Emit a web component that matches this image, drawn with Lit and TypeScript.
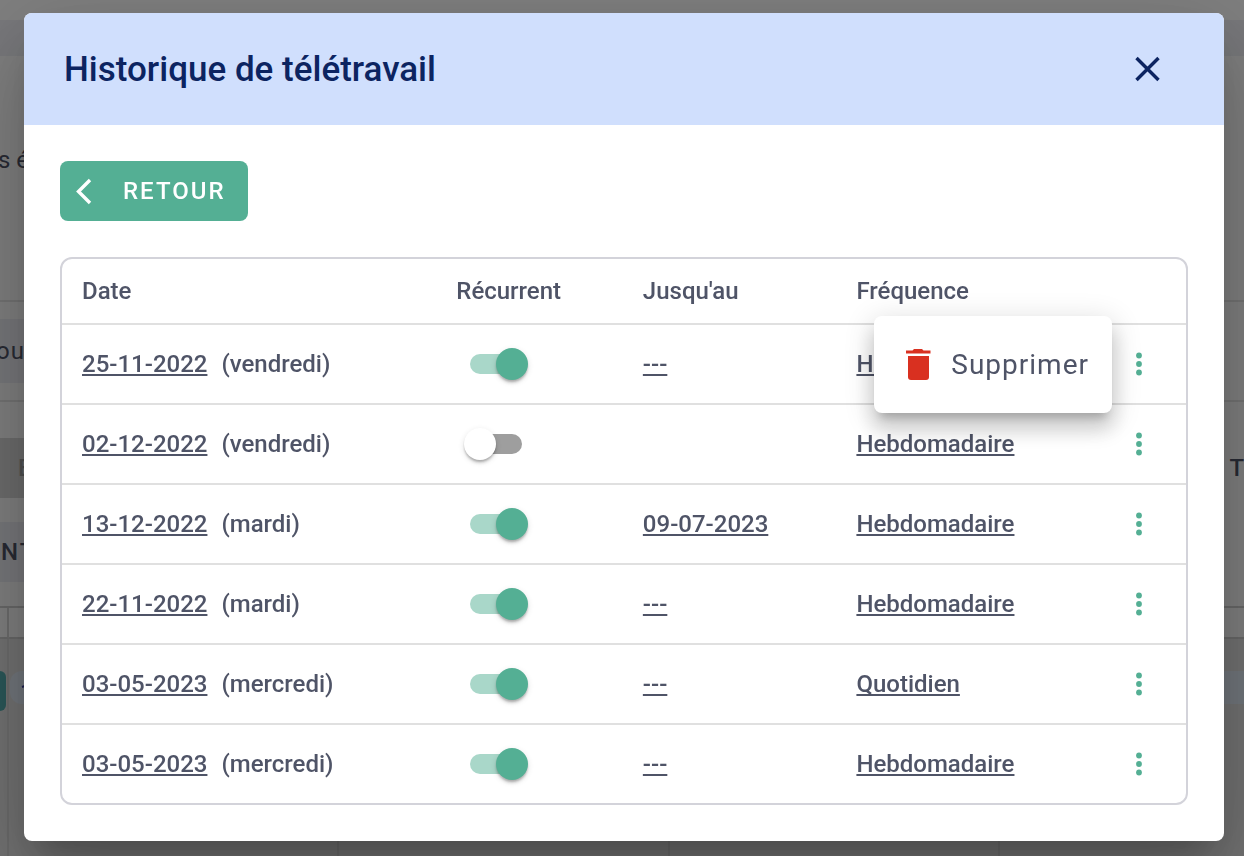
import { LitElement, html, css, nothing } from "lit";
import { customElement, property, state } from "lit/decorators.js";

interface Entry {
  date: string;
  day: string;
  recurrent: boolean;
  until: string;
  frequency: string;
}

const ENTRIES: Entry[] = [
  { date: "25-11-2022", day: "vendredi", recurrent: true, until: "---", frequency: "Hebdomadaire" },
  { date: "02-12-2022", day: "vendredi", recurrent: false, until: "", frequency: "Hebdomadaire" },
  { date: "13-12-2022", day: "mardi", recurrent: true, until: "09-07-2023", frequency: "Hebdomadaire" },
  { date: "22-11-2022", day: "mardi", recurrent: true, until: "---", frequency: "Hebdomadaire" },
  { date: "03-05-2023", day: "mercredi", recurrent: true, until: "---", frequency: "Quotidien" },
  { date: "03-05-2023", day: "mercredi", recurrent: true, until: "---", frequency: "Hebdomadaire" },
];

/** The planning page that stays visible around the dialog, under the scrim. */
@customElement("planning-page")
export class PlanningPage extends LitElement {
  static styles = css`
    :host {
      display: flex;
      flex-direction: column;
      height: 100%;
      overflow: hidden;
      background: #fff;
      color: #4f5467;
      font: 400 24px/32px Roboto, sans-serif;
    }
    .bar {
      flex: none;
      height: 36px;
      margin-top: 20px;
      background: #f0f1f6;
    }
    .intro {
      flex: none;
      box-sizing: border-box;
      height: 246px;
      padding-top: 88px;
      border-bottom: 2px solid #e6e6e6;
      text-indent: -2px;
    }
    .filters {
      flex: none;
      box-sizing: border-box;
      height: 100px;
      padding-top: 17px;
      border-bottom: 2px solid #e6e6e6;
    }
    .chip {
      display: flex;
      align-items: center;
      box-sizing: border-box;
      width: 50%;
      height: 64px;
      background: #eeeff5;
      text-indent: -4px;
      letter-spacing: 1px;
    }
    .tools {
      flex: none;
      display: grid;
      grid-template-columns: 50% 1fr;
      align-content: start;
      row-gap: 24px;
      box-sizing: border-box;
      height: 206px;
      padding-top: 36px;
      border-bottom: 2px solid #d0d0d0;
      font-weight: 500;
    }
    .off,
    .unit {
      display: flex;
      align-items: center;
      height: 60px;
    }
    .off {
      padding-left: 18px;
      background: #d9d9d9;
      color: #a0a0a0;
    }
    .unit {
      padding-left: 1px;
      background: #eeeff5;
      letter-spacing: 2px;
    }
    .total {
      display: flex;
      align-items: center;
      justify-content: flex-end;
    }
    .columns {
      flex: 1;
      display: grid;
      grid-template-columns: 9px repeat(3, 1fr) 244px;
      grid-template-rows: 31px 1fr;
    }
    .head,
    .slot {
      border-right: 2px solid #d6d6d6;
    }
    .head {
      border-bottom: 2px solid #d0d0d0;
    }
    .slot {
      padding-top: 32px;
      background: #e4e4e4;
    }
    .last {
      border-right: 0;
    }
    .event {
      height: 33px;
      margin-left: 1px;
      border-radius: 12px;
      background: #e3ecf8;
    }
    .teal {
      height: 40px;
      margin: 0 1px 0 0;
      border-radius: 0 12px 12px 0;
      background: #54aeb0;
    }
    .last .event {
      border-radius: 12px 0 0 12px;
    }
    svg {
      display: block;
    }
  `;

  render() {
    const columns = [0, 1, 2, 3, 4];
    return html`
      <div class="bar"></div>
      <div class="intro">s é</div>
      <div class="filters"><div class="chip">our</div></div>
      <div class="tools">
        <div class="off">E</div>
        <div class="total">T</div>
        <div class="unit">NT</div>
      </div>
      <div class="columns">
        ${columns.map((i) => html`<div class="head ${i === 4 ? "last" : ""}"></div>`)}
        ${columns.map(
          (i) => html`<div class="slot ${i === 4 ? "last" : ""}">
            <div class="event ${i === 0 ? "teal" : ""}">
              ${i === 1
                ? html`<svg width="24" height="33" viewBox="0 0 24 33" fill="none" stroke="#3a3fa0" stroke-width="2">
                    <path d="M12 16l4-1.500 4 1.500" />
                  </svg>`
                : nothing}
            </div>
          </div>`,
        )}
      </div>
    `;
  }
}

@customElement("history-row-menu")
export class HistoryRowMenu extends LitElement {
  @property({ type: Boolean }) open = false;

  static styles = css`
    :host {
      display: flex;
      justify-content: center;
      position: relative;
    }
    button {
      border: 0;
      background: none;
      cursor: pointer;
    }
    .kebab {
      display: block;
      padding: 0 16px;
    }
    svg {
      display: block;
    }
    .menu {
      position: absolute;
      z-index: 2;
      top: -32px;
      right: 74px;
      padding: 16px 0;
      border-radius: 8px;
      background: #fff;
      box-shadow: 0 10px 10px -6px rgba(0, 0, 0, 0.2), 0 16px 20px 2px rgba(0, 0, 0, 0.14),
        0 6px 28px 4px rgba(0, 0, 0, 0.12);
    }
    .delete {
      display: flex;
      align-items: center;
      gap: 19px;
      height: 65px;
      padding: 0 23px 0 30px;
      color: #4f5467;
      font: 400 28px/41px Roboto, sans-serif;
      letter-spacing: 1px;
    }
  `;

  render() {
    return html`
      <button class="kebab" aria-label="Actions" @click=${() => (this.open = !this.open)}>
        <svg width="8" height="32" viewBox="0 0 8 32" fill="#54af94">
          <circle cx="4" cy="7.5" r="2.900" />
          <circle cx="4" cy="16" r="2.900" />
          <circle cx="4" cy="24.5" r="2.900" />
        </svg>
      </button>
      ${this.open
        ? html`<div class="menu">
            <button class="delete">
              <svg width="28" height="33" viewBox="0 0 28 33" fill="#d93020">
                <path d="M2 2.500h6.500L10 1h8l1.500 1.500H26.500V5.500H2z" />
                <path d="M4 8h21v21a3 3 0 0 1-3 3h-15a3 3 0 0 1-3-3z" />
              </svg>
              <span>Supprimer</span>
            </button>
          </div>`
        : nothing}
    `;
  }
}

@customElement("app-root")
export class AppRoot extends LitElement {
  @state() private entries = ENTRIES;

  static styles = css`
    :host {
      display: block;
      color: #4f5467;
      font: 500 24px/32px Roboto, sans-serif;
    }
    .backdrop {
      position: fixed;
      inset: 0;
    }
    .scrim {
      position: relative;
      box-sizing: border-box;
      min-height: 100vh;
      overflow: hidden;
      padding: 13px 20px 15px 24px;
      background: rgba(0, 0, 0, 0.5);
    }
    .dialog {
      border-radius: 8px;
      background: #fff;
      box-shadow: 0 22px 30px -14px rgba(0, 0, 0, 0.2), 0 48px 76px 6px rgba(0, 0, 0, 0.14),
        0 18px 92px 16px rgba(0, 0, 0, 0.12);
    }
    .header {
      display: flex;
      align-items: center;
      justify-content: space-between;
      height: 112px;
      padding: 0 56px 0 40px;
      border-radius: 8px 8px 0 0;
      background: #d0dffd;
      color: #0c2461;
    }
    h1 {
      margin: 0;
      font-size: 35px;
      line-height: 49px;
      font-weight: 500;
    }
    button {
      border: 0;
      font: inherit;
      cursor: pointer;
    }
    .close {
      padding: 0;
      background: none;
      color: inherit;
    }
    svg {
      display: block;
    }
    .body {
      display: flex;
      flex-direction: column;
      align-items: flex-start;
      gap: 36px;
      padding: 36px;
    }
    .back {
      display: flex;
      align-items: center;
      gap: 30px;
      height: 60px;
      padding: 0 22px 0 15px;
      border-radius: 8px;
      background: #54af94;
      color: #fff;
      letter-spacing: 2px;
    }
    table {
      width: 100%;
      table-layout: fixed;
      border: 2px solid #d3d3da;
      border-radius: 12px;
      border-spacing: 0;
    }
    .col-date {
      width: 33.3%;
    }
    .col-recurrent {
      width: 16.6%;
    }
    .col-until {
      width: 19%;
    }
    .col-actions {
      width: 94px;
    }
    th,
    td {
      padding: 0 20px;
      border-bottom: 2px solid #e0e0e0;
      text-align: left;
      font-weight: 500;
    }
    th {
      height: 64px;
    }
    td {
      height: 78px;
    }
    tr:last-child td {
      border-bottom: 0;
    }
    .actions {
      padding: 0;
    }
    a {
      color: inherit;
      text-decoration: underline 2px;
      text-underline-offset: 2px;
      text-decoration-skip-ink: none;
    }
    .day {
      margin-left: 8px;
    }
    .switch {
      appearance: none;
      display: grid;
      align-items: center;
      width: 64px;
      height: 32px;
      margin: 0 0 0 8px;
      cursor: pointer;
    }
    .switch::before,
    .switch::after {
      content: "";
      grid-area: 1 / 1;
    }
    .switch::before {
      height: 20px;
      margin: 0 6px;
      border-radius: 10px;
      background: #9e9e9e;
    }
    .switch::after {
      width: 32px;
      height: 32px;
      border-radius: 50%;
      background: #fff;
      box-shadow: 0 4px 4px -2px rgba(0, 0, 0, 0.2), 0 2px 2px rgba(0, 0, 0, 0.14),
        0 2px 6px rgba(0, 0, 0, 0.12);
    }
    .switch:checked::before {
      background: #a9d7c9;
    }
    .switch:checked::after {
      justify-self: end;
      background: #54af94;
    }
  `;

  private row(entry: Entry, index: number) {
    return html`<tr>
      <td><a href="#">${entry.date}</a> <span class="day">(${entry.day})</span></td>
      <td>
        <input
          class="switch"
          type="checkbox"
          role="switch"
          aria-label="Récurrent"
          .checked=${entry.recurrent}
        />
      </td>
      <td>${entry.until ? html`<a href="#">${entry.until}</a>` : nothing}</td>
      <td><a href="#">${entry.frequency}</a></td>
      <td class="actions"><history-row-menu ?open=${index === 0}></history-row-menu></td>
    </tr>`;
  }

  render() {
    return html`
      <div class="backdrop" aria-hidden="true"><planning-page></planning-page></div>
      <div class="scrim">
        <div class="dialog" role="dialog" aria-modal="true" aria-labelledby="title">
          <div class="header">
            <h1 id="title">Historique de télétravail</h1>
            <button class="close" aria-label="Fermer">
              <svg width="40" height="40" viewBox="0 0 40 40" fill="none" stroke="currentColor" stroke-width="3.400">
                <path d="M8.500 9l22 22M30.500 9l-22 22" />
              </svg>
            </button>
          </div>
          <div class="body">
            <button class="back">
              <svg width="18" height="28" viewBox="0 0 18 28" fill="none" stroke="currentColor" stroke-width="3.400">
                <path d="M15 3L3.500 14.500 15 26" />
              </svg>
              <span>RETOUR</span>
            </button>
            <table>
              <colgroup>
                <col class="col-date" />
                <col class="col-recurrent" />
                <col class="col-until" />
                <col />
                <col class="col-actions" />
              </colgroup>
              <thead>
                <tr>
                  <th>Date</th>
                  <th>Récurrent</th>
                  <th>Jusqu'au</th>
                  <th>Fréquence</th>
                  <th></th>
                </tr>
              </thead>
              <tbody>
                ${this.entries.map((entry, index) => this.row(entry, index))}
              </tbody>
            </table>
          </div>
        </div>
      </div>
    `;
  }
}
